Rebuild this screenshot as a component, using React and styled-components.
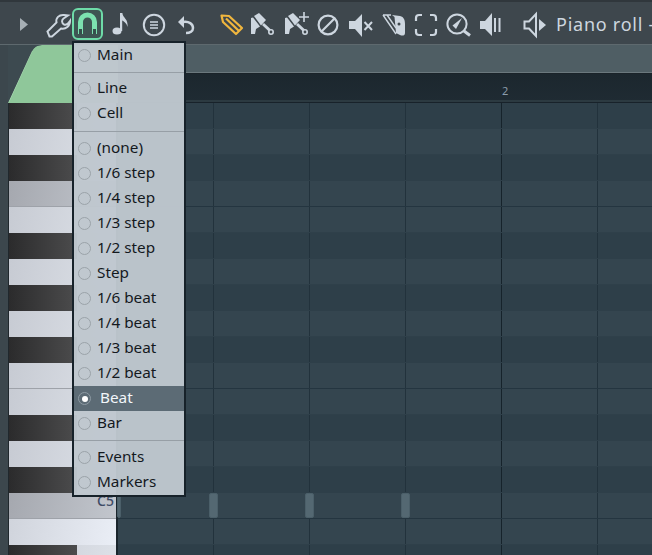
import React from "react";
import styled, { createGlobalStyle } from "styled-components";

const Global = createGlobalStyle`
  html, body { margin: 0; padding: 0; background: #3c464c; }
  * { box-sizing: border-box; }
`;

const Frame = styled.div`
  position: relative;
  width: 652px;
  height: 555px;
  overflow: hidden;
  background: #3c474d;
  font-family: "Noto Sans", "Open Sans", sans-serif;
`;

const Toolbar = styled.header`
  display: flex;
  align-items: flex-start;
  height: 45px;
  padding: 7px 0 0 8px;
  background: #3e474d;
  border-top: 2px solid #30373c;
  border-bottom: 1px solid #5e696e;
  white-space: nowrap;
`;

const Slot = styled.span`
  flex: none;
  display: block;
  width: 32px;
  height: 32px;
  margin-left: ${(p) => p.$gap || 0}px;
  color: ${(p) => p.$color || "#cdd6df"};
  svg { display: block; width: 32px; height: 32px; }
`;

const MagnetButton = styled.span`
  flex: none;
  display: block;
  width: 31px;
  height: 32px;
  margin: -1px 0 0 -2px;
  border: 2px solid #6edba8;
  border-radius: 6px;
  background: #3e5553;
  svg { display: block; margin: -2px; width: 31px; height: 32px; }
`;

const Title = styled.span`
  flex: none;
  margin: 1px 0 0 5px;
  font-size: 18px;
  line-height: 28px;
  letter-spacing: 0.75px;
  color: #cdd6df;
`;

const Header = styled.div`
  display: flex;
  height: 58px;
  padding-left: 8px;
`;

const Corner = styled.div`
  flex: none;
  width: 110px;
  background: #46535a;
  svg { display: block; width: 110px; height: 58px; }
`;

const HeaderRight = styled.div`
  flex: 1;
  display: flex;
  flex-direction: column;
`;

const TabStrip = styled.div`
  height: 28px;
  background: #4f5e64;
  border-bottom: 1px solid #6b787d;
`;

const Ruler = styled.div`
  height: 30px;
  padding: 9px 0 0 384px;
  background: linear-gradient(#1c272e, #1f2b33);
  border-top: 1px solid #1a2329;
  border-bottom: 1px solid #18222a;
  box-shadow: inset 0 -2px 0 #2c3a41;
  font-size: 11px;
  line-height: 15px;
  color: #8b9cab;
`;

const Body = styled.div`
  display: flex;
  height: 452px;
  padding-left: 8px;
  background: #3c474d;
  overflow: hidden;
`;

const Keys = styled.div`
  flex: none;
  width: 110px;
  border-left: 1px solid #20282d;
  border-right: 2px solid #1a252c;
`;

const WHITE = "linear-gradient(100deg, #c7cbd3, #dde1e8)";
const GRAY = "linear-gradient(100deg, #a5a8af, #c2c6cd)";

const Key = styled.div`
  display: flex;
  justify-content: flex-end;
  height: 26px;
  padding-right: 2px;
  padding-top: 1px;
  font-size: 14px;
  line-height: 14px;
  font-weight: 500;
  color: #3e4c66;
  background: ${(p) =>
    p.$kind === "gray" ? GRAY : p.$kind === "bright" ? "linear-gradient(100deg, #d0d4dc, #eaeef6)" : WHITE};
  border-bottom: ${(p) => (p.$line ? "1px solid #9ea2a9" : "none")};
`;

const BlackKey = styled.div`
  height: 26px;
  background: ${WHITE};
  &::before {
    content: "";
    display: block;
    width: 68px;
    height: 26px;
    background: linear-gradient(90deg, #2b2b2c, #4c4c4d);
  }
`;

const Roll = styled.div`
  flex: 1;
  min-width: 0;
`;

const Lane = styled.div`
  position: relative;
  height: 26px;
  background-color: ${(p) => (p.$dark ? "#2e3f49" : "#34454f")};
  background-image:
    linear-gradient(90deg, #16232b 1px, transparent 1px),
    linear-gradient(90deg, #22323c 1px, transparent 1px);
  background-size: 384px 100%, 96px 100%;
  background-position: 383px 0, 95px 0;
  border-bottom: 1px solid ${(p) => (p.$line ? "#243540" : p.$dark ? "#2e3f49" : "#2f404a")};
`;

const Note = styled.span`
  position: absolute;
  top: 0;
  left: ${(p) => p.$x}px;
  width: ${(p) => p.$w}px;
  height: 25px;
  border-radius: 2px;
  background: #546872;
  border: 1px solid #4b5f69;
`;

const Menu = styled.div`
  position: absolute;
  left: 72px;
  top: 41px;
  width: 114px;
  height: 456px;
  border: 2px solid #17222a;
  background: rgba(191, 199, 206, 0.97);
`;

const Item = styled.div`
  display: flex;
  align-items: center;
  height: 25px;
  padding-left: 4px;
  font-size: 15.3px;
  color: ${(p) => (p.$on ? "#f2f6fa" : "#14191e")};
  background: ${(p) => (p.$on ? "#5c6b75" : "transparent")};
`;

const Label = styled.span`
  display: block;
  height: 25px;
  line-height: 23px;
`;

const Radio = styled.span`
  flex: none;
  display: flex;
  align-items: center;
  justify-content: center;
  width: 13px;
  height: 13px;
  margin-right: ${(p) => (p.$on ? 9 : 6)}px;
  border-radius: 50%;
  border: 1.5px solid ${(p) => (p.$on ? "#8d9aa3" : "#9ba3a9")};
  &::after {
    content: "";
    display: ${(p) => (p.$on ? "block" : "none")};
    width: 6px;
    height: 6px;
    border-radius: 50%;
    background: #fff;
  }
`;

const Sep = styled.div`
  display: flex;
  align-items: center;
  height: ${(p) => p.$h}px;
  &::after {
    content: "";
    flex: 1;
    height: 1px;
    background: #979fa6;
  }
`;

const Svg = ({ children }) => <svg viewBox="0 0 32 32">{children}</svg>;

const line = { fill: "none", stroke: "currentColor", strokeWidth: 2 };
const fill = { fill: "currentColor" };

const Brush = ({ plus }) => (
  <Svg>
    <polygon points="8,7 13,4 20,11 15,16.5" {...fill} />
    <polygon points="5,9 7,8.5 14,17.5 10,20 9,25 5,25" {...fill} />
    <path d="M17 15 L25 22.5" stroke="currentColor" strokeWidth="3" />
    <circle cx="25" cy="23" r="2.2" fill="#3e474d" stroke="currentColor" strokeWidth="1.6" />
    {plus && <path d="M24 3 V13 M19 8 H29" stroke="currentColor" strokeWidth="1.6" />}
  </Svg>
);

const Icons = {
  play: <Svg><polygon points="12,9 20,15.5 12,22" fill="#a6afb5" /></Svg>,
  wrench: (
    <Svg>
      <path
        d="M5.5 22.5 L14.5 13.5 C13.5 9 17 5.5 22 6 L26 6.5 L21.5 9.5 C19.5 11 19.5 14 22 15.5 C24 16.5 26 15 28 12 C28 17 24 20.5 19 19.5 L10 27.5 L7.5 27.5 Z"
        {...line}
      />
    </Svg>
  ),
  note: (
    <Svg>
      <ellipse cx="13" cy="22" rx="4.5" ry="3.6" {...fill} />
      <rect x="16" y="4" width="2.2" height="18" {...fill} />
      <path d="M17 4 H18.2 C19 9 24.5 10 23.5 18 C22.5 14 20 12 17 11 Z" {...fill} />
    </Svg>
  ),
  menu: (
    <Svg>
      <circle cx="16" cy="16" r="10.2" {...line} />
      <path d="M12 13 H20 M12 16 H20 M12 19 H20" stroke="currentColor" strokeWidth="1.5" />
    </Svg>
  ),
  undo: (
    <Svg>
      <polygon points="9,13 15,7 15,19" {...fill} />
      <path d="M14 13 C20 12 24 15 24 19 C24 22 21 24 17 24" fill="none" stroke="currentColor" strokeWidth="2.5" />
    </Svg>
  ),
  pencil: (
    <Svg>
      <path d="M6.5 6.5 L14 7 L27 19 L21 25 L8 13 Z M11 9.5 L24 22" fill="none" stroke="currentColor" strokeWidth="2.2" strokeLinejoin="round" />
    </Svg>
  ),
  brush: <Brush />,
  brushPlus: <Brush plus />,
  ban: (
    <Svg>
      <circle cx="16" cy="16" r="9.4" fill="none" stroke="currentColor" strokeWidth="2.2" />
      <path d="M9.5 22.5 L22.5 9.5" stroke="currentColor" strokeWidth="2.2" />
    </Svg>
  ),
  mute: (
    <Svg>
      <polygon points="5,12 11,12 18,5 18,28 11,20 5,20" {...fill} />
      <path d="M20.5 13 L28 21 M28 13 L20.5 21" stroke="currentColor" strokeWidth="2" />
    </Svg>
  ),
  slice: (
    <Svg>
      <path d="M5 6 H13 M5 6 L18 25 M9 6 L18 19" fill="none" stroke="currentColor" strokeWidth="1.4" />
      <path d="M14 6 L22 7 C26 8 27 11 27 15 V24 C27 27 24 27 22 26 L18 24 L16.5 8 Z" {...fill} />
      <circle cx="21" cy="15" r="1.5" fill="#3e474d" />
    </Svg>
  ),
  select: (
    <Svg>
      <path
        d="M6 12 V9 Q6 6 9 6 H12 M20 6 H23 Q26 6 26 9 V12 M26 20 V23 Q26 26 23 26 H20 M12 26 H9 Q6 26 6 23 V20"
        fill="none"
        stroke="currentColor"
        strokeWidth="2.2"
      />
    </Svg>
  ),
  zoom: (
    <Svg>
      <circle cx="15" cy="15" r="9.6" {...line} />
      <polygon points="20,9 14,20 10.5,16.5" {...fill} />
      <path d="M22 22 L28 26.5" stroke="currentColor" strokeWidth="3" />
    </Svg>
  ),
  volume: (
    <Svg>
      <polygon points="6,12 11,12 18,4 18,27 11,20 6,20" {...fill} />
      <path d="M21 9 V23 M25.5 9 V23" stroke="currentColor" strokeWidth="2" />
    </Svg>
  ),
  speaker: (
    <Svg>
      <path d="M5.5 12.5 H10 L17 5 V27 L10 19.5 H5.5 Z" {...line} />
      <polygon points="20,10 27,16 20,22" {...fill} />
    </Svg>
  ),
};

const tools = [
  ["play", 0],
  ["wrench", 2],
  ["magnet", 0],
  ["note", 1],
  ["menu", 2],
  ["undo", -1],
  ["pencil", 14, "#f0b63e"],
  ["brush", -1],
  ["brushPlus", 2],
  ["ban", 0],
  ["mute", 0],
  ["slice", 2],
  ["select", 0],
  ["zoom", 0],
  ["volume", 0],
  ["speaker", 13],
];

const keys = [
  "black", "white", "black", "gray", "white", "black", "white", "black", "white",
  "black", "line", "white", "black", "white", "black", "c5", "bright", "black",
];

const menu = [
  ["Main"], 8,
  ["Line"], ["Cell"], 10,
  ["(none)"], ["1/6 step"], ["1/4 step"], ["1/3 step"], ["1/2 step"], ["Step"],
  ["1/6 beat"], ["1/4 beat"], ["1/3 beat"], ["1/2 beat"], ["Beat", true], ["Bar"], 9,
  ["Events"], ["Markers"],
];

export default function App() {
  return (
    <Frame>
      <Global />
      <Toolbar>
        {tools.map(([name, gap, color]) =>
          name === "magnet" ? (
            <MagnetButton key={name}>
              <svg viewBox="0 0 31 32">
                <path d="M8.5 26 V14 A7 7 0 0 1 22.5 14 V26" fill="none" stroke="#7ce1b0" strokeWidth="5" />
                <rect x="7" y="21" width="3" height="5" fill="#35504c" />
                <rect x="21" y="21" width="3" height="5" fill="#35504c" />
              </svg>
            </MagnetButton>
          ) : (
            <Slot key={name} $gap={gap} $color={color}>
              {Icons[name]}
            </Slot>
          )
        )}
        <Title>Piano roll -</Title>
      </Toolbar>
      <Header>
        <Corner>
          <svg viewBox="0 0 110 58">
            <path d="M0 58 V57 L24 6 Q27 0 34 0 H110 V58 Z" fill="#8fc79a" />
            <path d="M0.5 57.5 L24 6" stroke="#a9dab2" fill="none" />
            <path d="M0 58 V57 L0 0 H34 Q27 0 24 6 Z" fill="#3d4a50" />
          </svg>
        </Corner>
        <HeaderRight>
          <TabStrip />
          <Ruler>2</Ruler>
        </HeaderRight>
      </Header>
      <Body>
        <Keys>
          {keys.map((k, i) =>
            k === "black" ? (
              <BlackKey key={i} />
            ) : (
              <Key
                key={i}
                $kind={k === "gray" || k === "c5" ? "gray" : k === "bright" ? "bright" : "white"}
                $line={k === "gray" || k === "c5" || k === "line"}
              >
                {k === "c5" ? "C5" : null}
              </Key>
            )
          )}
        </Keys>
        <Roll>
          {keys.map((k, i) => (
            <Lane key={i} $dark={k === "black"} $line={k === "gray" || k === "c5" || k === "line"}>
              {k === "c5" && (
                <>
                  <Note $x={-1} $w={4} />
                  <Note $x={91} $w={9} />
                  <Note $x={187} $w={9} />
                  <Note $x={283} $w={9} />
                </>
              )}
            </Lane>
          ))}
        </Roll>
      </Body>
      <Menu>
        {menu.map((m, i) =>
          typeof m === "number" ? (
            <Sep key={i} $h={m} />
          ) : (
            <Item key={i} $on={m[1]}>
              <Radio $on={m[1]} />
              <Label>{m[0]}</Label>
            </Item>
          )
        )}
      </Menu>
    </Frame>
  );
}
